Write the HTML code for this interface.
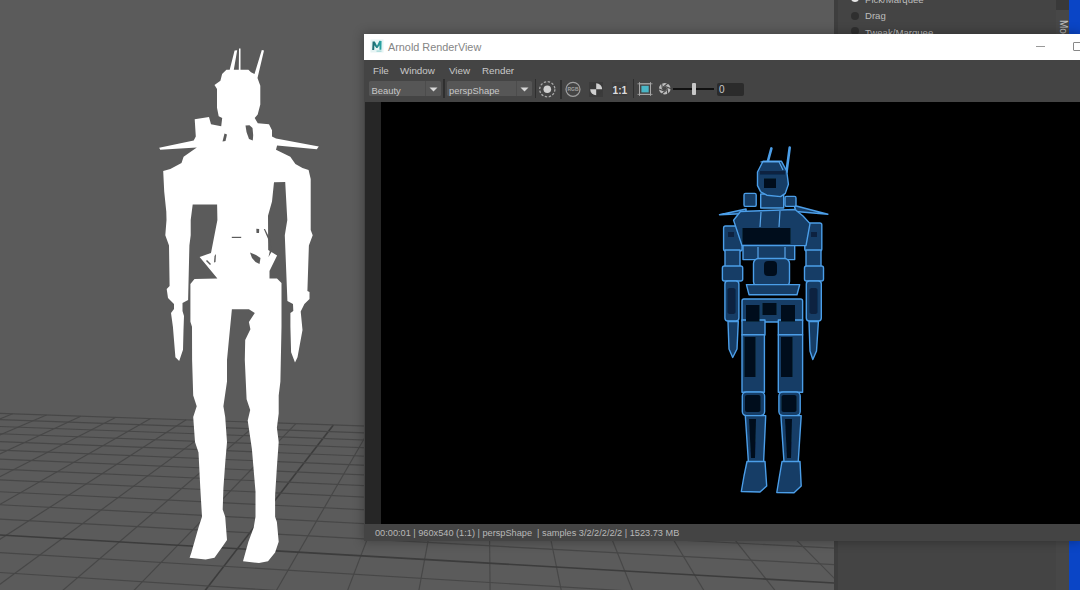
<!DOCTYPE html>
<html><head><meta charset="utf-8">
<style>
*{margin:0;padding:0;box-sizing:border-box}
html,body{width:1080px;height:590px;overflow:hidden;background:#5b5b5b;font-family:"Liberation Sans",sans-serif}
.abs{position:absolute}
#vp{position:absolute;left:0;top:0;width:834px;height:590px;background:#5b5b5b}
#vpstrip{left:834px;top:0;width:4px;height:590px;background:#3e3e3e}
#panel{left:838px;top:0;width:218px;height:590px;background:#444}
#pstrip{left:1056px;top:0;width:13px;height:590px;background:#474747}
#pstripTop{left:1056px;top:0;width:13px;height:10px;background:#393939}
#blue{left:1069px;top:0;width:11px;height:590px;background:#0a45c6}
.radio{width:8px;height:8px;border-radius:50%;background:#2f2f2f}
.ptxt{color:#bdbdbd;font-size:9.6px;line-height:10px;white-space:nowrap}
#win{left:364px;top:34.4px;width:716px;height:507px;background:#444;box-shadow:0 0 10px 1px rgba(0,0,0,0.28)}
#title{left:0;top:0;width:716px;height:25.6px;background:#fff}
.menu{color:#c8c8c8;font-size:9.8px;line-height:10px;white-space:nowrap}
.dd{background:#565656;border-radius:1.5px}
.ddtxt{color:#c8c8c8;font-size:9.4px;line-height:10px;white-space:nowrap}
.sep{width:1.5px;background:#2f2f2f}
</style></head><body>
<svg id="vp" width="834" height="590" viewBox="0 0 834 590">
<rect width="834" height="590" fill="#5b5b5b"/>
<g shape-rendering="geometricPrecision">
<line x1="-86.3" y1="410.3" x2="-1505.8" y2="864.2" stroke="#474747" stroke-width="1.15"/>
<line x1="-53.7" y1="411.5" x2="-1421.8" y2="878.2" stroke="#474747" stroke-width="1.15"/>
<line x1="-20.7" y1="412.6" x2="-1334.1" y2="892.8" stroke="#474747" stroke-width="1.15"/>
<line x1="12.7" y1="413.8" x2="-1242.4" y2="908.0" stroke="#474747" stroke-width="1.15"/>
<line x1="46.5" y1="415.0" x2="-1146.4" y2="924.0" stroke="#474747" stroke-width="1.15"/>
<line x1="80.8" y1="416.2" x2="-1045.7" y2="940.8" stroke="#474747" stroke-width="1.15"/>
<line x1="115.5" y1="417.4" x2="-940.1" y2="958.3" stroke="#474747" stroke-width="1.15"/>
<line x1="150.6" y1="418.6" x2="-829.1" y2="976.8" stroke="#474747" stroke-width="1.15"/>
<line x1="186.2" y1="419.8" x2="-712.4" y2="996.2" stroke="#474747" stroke-width="1.15"/>
<line x1="222.3" y1="421.1" x2="-589.5" y2="1016.6" stroke="#474747" stroke-width="1.15"/>
<line x1="258.8" y1="422.4" x2="-459.9" y2="1038.2" stroke="#474747" stroke-width="1.15"/>
<line x1="295.9" y1="423.6" x2="-323.0" y2="1061.0" stroke="#474747" stroke-width="1.15"/>
<line x1="333.4" y1="424.9" x2="-178.2" y2="1085.1" stroke="#3c3c3c" stroke-width="1.6"/>
<line x1="371.4" y1="426.3" x2="-24.7" y2="1110.6" stroke="#474747" stroke-width="1.15"/>
<line x1="409.9" y1="427.6" x2="138.1" y2="1137.7" stroke="#474747" stroke-width="1.15"/>
<line x1="449.0" y1="429.0" x2="311.3" y2="1166.5" stroke="#474747" stroke-width="1.15"/>
<line x1="488.6" y1="430.4" x2="495.7" y2="1197.1" stroke="#474747" stroke-width="1.15"/>
<line x1="528.7" y1="431.8" x2="692.7" y2="1229.9" stroke="#474747" stroke-width="1.15"/>
<line x1="569.4" y1="433.2" x2="903.4" y2="1265.0" stroke="#474747" stroke-width="1.15"/>
<line x1="610.7" y1="434.6" x2="1129.4" y2="1302.5" stroke="#474747" stroke-width="1.15"/>
<line x1="652.5" y1="436.1" x2="1372.4" y2="1342.9" stroke="#474747" stroke-width="1.15"/>
<line x1="694.9" y1="437.5" x2="1634.3" y2="1386.5" stroke="#474747" stroke-width="1.15"/>
<line x1="738.0" y1="439.0" x2="1917.6" y2="1433.6" stroke="#474747" stroke-width="1.15"/>
<line x1="781.6" y1="440.6" x2="2224.8" y2="1484.7" stroke="#474747" stroke-width="1.15"/>
<line x1="825.9" y1="442.1" x2="2559.3" y2="1540.4" stroke="#474747" stroke-width="1.15"/>
<line x1="-86.3" y1="410.3" x2="825.9" y2="442.1" stroke="#474747" stroke-width="1.15"/>
<line x1="-103.8" y1="415.9" x2="838.2" y2="449.9" stroke="#474747" stroke-width="1.15"/>
<line x1="-122.4" y1="421.9" x2="851.3" y2="458.2" stroke="#474747" stroke-width="1.15"/>
<line x1="-142.3" y1="428.2" x2="865.5" y2="467.2" stroke="#474747" stroke-width="1.15"/>
<line x1="-163.4" y1="435.0" x2="880.9" y2="476.9" stroke="#474747" stroke-width="1.15"/>
<line x1="-186.1" y1="442.3" x2="897.5" y2="487.5" stroke="#474747" stroke-width="1.15"/>
<line x1="-210.4" y1="450.0" x2="915.6" y2="498.9" stroke="#474747" stroke-width="1.15"/>
<line x1="-236.5" y1="458.4" x2="935.4" y2="511.5" stroke="#474747" stroke-width="1.15"/>
<line x1="-264.7" y1="467.4" x2="957.1" y2="525.2" stroke="#474747" stroke-width="1.15"/>
<line x1="-295.1" y1="477.1" x2="981.0" y2="540.3" stroke="#474747" stroke-width="1.15"/>
<line x1="-328.1" y1="487.7" x2="1007.4" y2="557.1" stroke="#474747" stroke-width="1.15"/>
<line x1="-364.0" y1="499.2" x2="1036.8" y2="575.7" stroke="#474747" stroke-width="1.15"/>
<line x1="-403.3" y1="511.7" x2="1069.8" y2="596.6" stroke="#3c3c3c" stroke-width="1.6"/>
<line x1="-446.3" y1="525.5" x2="1106.9" y2="620.1" stroke="#474747" stroke-width="1.15"/>
<line x1="-493.7" y1="540.6" x2="1149.1" y2="646.9" stroke="#474747" stroke-width="1.15"/>
<line x1="-546.1" y1="557.4" x2="1197.5" y2="677.5" stroke="#474747" stroke-width="1.15"/>
<line x1="-604.5" y1="576.1" x2="1253.4" y2="713.0" stroke="#474747" stroke-width="1.15"/>
<line x1="-669.9" y1="597.0" x2="1319.0" y2="754.5" stroke="#474747" stroke-width="1.15"/>
<line x1="-743.7" y1="620.5" x2="1396.8" y2="803.8" stroke="#474747" stroke-width="1.15"/>
<line x1="-827.4" y1="647.3" x2="1490.6" y2="863.3" stroke="#474747" stroke-width="1.15"/>
<line x1="-923.5" y1="678.0" x2="1606.1" y2="936.4" stroke="#474747" stroke-width="1.15"/>
<line x1="-1034.6" y1="713.6" x2="1751.5" y2="1028.6" stroke="#474747" stroke-width="1.15"/>
<line x1="-1164.8" y1="755.2" x2="1940.4" y2="1148.2" stroke="#474747" stroke-width="1.15"/>
<line x1="-1319.3" y1="804.6" x2="2195.5" y2="1309.9" stroke="#474747" stroke-width="1.15"/>
<line x1="-1505.8" y1="864.2" x2="2559.3" y2="1540.4" stroke="#474747" stroke-width="1.15"/>
</g>
<path fill="#fff" d="M222.1 73.9 L226.4 69.7 L229.7 69.7 L234.6 50.5 L237.2 50.2 L233.8 69.7 L238.8 69.7 L239 48.5 L240.5 48.5 L240.5 69.7 L248.4 69.7 L251 72.2 L254.5 74 L261.8 50 L264 50.5 L257.5 78 L260.3 85.8 L260.3 104.4 L257.7 114.6 L254.7 118.1 L257.8 123.2 L269 124.2 L272 130.3 L272 136.4 L276 138.5 L318.8 146.6 L316.8 149.2 L277.1 145.6 L276 149.7 L290.3 156.8 L295.4 163.9 L302.5 168 L308.6 170 L310.7 179.1 L310.7 230 L312.7 235.3 L308.9 245.4 L307.4 291 L309.5 292 L309.5 299 L304.4 304 L300.7 311.5 L302.5 330 L297.5 357.3 L295 362.4 L291.1 352.2 L290.4 326.8 L290.4 313 L293.3 311 L293 304 L287.4 301 L284.8 235.3 L287.3 220 L285.2 182 L274 182.2 L272 201.5 L268 215.8 L268.2 250 L277.1 255.6 L269.5 270.9 L269.5 278.5 L277 278.5 L281.5 283 L281.5 326.8 L280.4 381.4 L278.7 395.6 L278.7 413.4 L276.9 427.7 L278.7 442 L276.9 466.9 L275.1 495.4 L275.1 516.7 L276.9 522.1 L278.7 541.7 L275.1 552.4 L268 561.3 L259 563.1 L243 561.3 L248.4 541.7 L253.7 527.4 L255.5 516.7 L255.5 491.8 L251.9 449.1 L247.7 420.6 L250.2 409.9 L246.6 399.2 L244.8 360 L245.2 340 L250.4 329.3 L248.9 321.9 L254.8 313 L248.9 309.3 L231.9 309.3 L228.9 340 L227 360 L227 381.4 L223.4 406.3 L225.2 417 L227 442 L225.2 463.3 L223.4 488.3 L222.7 509.6 L225.2 516.7 L227 539.9 L223.4 545.2 L214.5 557.7 L205.6 559.5 L189.6 557.7 L191.4 552.4 L198.5 527.4 L202 516.7 L200.3 488.3 L198.5 452.6 L195 442 L193.2 417 L196.7 406.3 L193.2 395.6 L192.1 360 L192 326.8 L190.4 321.7 L190.4 284 L194.5 279 L217.4 278.5 L199.6 256.9 L211 253 L217.4 220 L217.1 204.6 L192.7 204.6 L190.7 220 L190.7 235.3 L189.4 245.4 L188.1 300 L182.5 303 L182.5 311 L184 316 L183.5 330 L183 349.7 L179.2 361.1 L175.4 357.3 L172.9 326.8 L171 313 L174 309 L174 304 L168 298 L166.7 289 L169.6 286 L169 245.4 L165.3 235.3 L166.5 220 L166.3 211.7 L164.2 191.4 L163.2 171 L170.3 169 L181.5 162.9 L183.6 156.8 L196.8 147.6 L160.2 149.7 L159.2 147.8 L193.7 140.5 L195.8 136.4 L194.7 119.2 L209 117.1 L211 124.2 L221.2 126.3 L222.2 118.1 L218.7 116.3 L217 107.8 L217 89 L214.5 84.9 L220.4 80.7 Z"/>
<g fill="#5b5b5b">
<path d="M245.5 125.5 L249.5 125.2 L252.5 128 L253.2 135 L252.8 140.6 L249 139 L246.5 132 Z"/>
<path d="M224.5 133.5 L227 134.5 L225.5 141 L222.5 141.5 Z"/>
<path d="M250 252.5 L256 255 L260.5 258 L259.5 264 L255.5 262 L252 258 Z"/>
<path d="M256.3 228.7 L259.2 229 L259 233 L256.5 233 Z"/>
<path d="M263.8 229 L265 229 L270.5 240 L271.5 252 L268.5 257 L270 250 L268.5 240 Z"/>
<rect x="231.8" y="236.8" width="9.4" height="1.2"/>
<path d="M207 260 L211 264 L210 265 L206 261 Z"/>
<path d="M214.5 256 L216 254 L215.5 262 L214 262.5 Z"/>
</g>
</svg>
<div class="abs" id="vpstrip"></div>
<div class="abs" id="panel"></div>
<div class="abs" id="pstrip"></div>
<div class="abs" id="pstripTop"></div>
<div class="abs" id="blue"></div>
<!-- panel radios -->
<div class="abs radio" style="left:851px;top:-6px;background:#e8e8e8"></div>
<div class="abs ptxt" style="left:865px;top:-5px">Pick/Marquee</div>
<div class="abs radio" style="left:851px;top:12px"></div>
<div class="abs ptxt" style="left:865px;top:11px">Drag</div>
<div class="abs radio" style="left:851px;top:27px"></div>
<div class="abs ptxt" style="left:865px;top:27.5px">Tweak/Marquee</div>
<div class="abs ptxt" style="left:1057px;top:19px;transform-origin:0 0;transform:translate(11px,1px) rotate(90deg);font-size:10px">Mo</div>

<div class="abs" id="win">
  <div class="abs" id="title">
    <svg class="abs" style="left:5.5px;top:4.8px" width="14" height="14" viewBox="0 0 14 14">
      <defs><linearGradient id="mg" x1="0" y1="0" x2="1" y2="0"><stop offset="0" stop-color="#18676d"/><stop offset="1" stop-color="#2aa7a6"/></linearGradient></defs>
      <rect x="0.5" y="0.5" width="13" height="13" fill="#e6f4f4"/>
      <path d="M2.2 11 L2.6 2.4 L4.8 2.4 L7 6.8 L9.4 1.8 L11.6 2 L11.4 10.8 L9.5 10.8 L9.5 6.2 L7.5 9 L6.3 9 L4.4 6.3 L4.2 11 Z" fill="url(#mg)"/>
      <rect x="6.5" y="11.6" width="5" height="1" fill="#8fcfcf"/>
    </svg>
    <div class="abs" style="left:24px;top:7px;font-size:10.85px;line-height:12px;color:#858585;white-space:nowrap">Arnold RenderView</div>
    <div class="abs" style="left:672px;top:12px;width:9px;height:1px;background:#999"></div>
    <div class="abs" style="left:709px;top:8px;width:10px;height:9px;border:1px solid #888;border-radius:1px"></div>
  </div>
  <!-- menu -->
  <div class="abs menu" style="left:9px;top:32px">File</div>
  <div class="abs menu" style="left:36px;top:32px">Window</div>
  <div class="abs menu" style="left:85px;top:32px">View</div>
  <div class="abs menu" style="left:118px;top:32px">Render</div>
  <!-- toolbar -->
  <div class="abs dd" style="left:5px;top:47px;width:72px;height:15px"></div>
  <div class="abs" style="left:61px;top:47px;width:1px;height:15px;background:#4c4c4c"></div>
  <div class="abs ddtxt" style="left:7.5px;top:52px">Beauty</div>
  <svg class="abs" style="left:65px;top:52.5px" width="9" height="5"><path d="M0.5 0.5 L8.5 0.5 L4.5 4.5Z" fill="#d8d8d8"/></svg>
  <div class="abs sep" style="left:79px;top:45px;height:19px"></div>
  <div class="abs dd" style="left:82.5px;top:47px;width:85px;height:15px"></div>
  <div class="abs" style="left:152px;top:47px;width:1px;height:15px;background:#4c4c4c"></div>
  <div class="abs ddtxt" style="left:85px;top:52px">perspShape</div>
  <svg class="abs" style="left:156px;top:52.5px" width="9" height="5"><path d="M0.5 0.5 L8.5 0.5 L4.5 4.5Z" fill="#d8d8d8"/></svg>
  <div class="abs sep" style="left:170.5px;top:45px;height:19px"></div>
  <svg class="abs" style="left:173px;top:45px" width="20" height="20" viewBox="0 0 20 20">
    <circle cx="10.3" cy="10.3" r="7.6" fill="none" stroke="#a8a8a8" stroke-width="1.3" stroke-dasharray="2.4 1.6"/>
    <circle cx="10.3" cy="10.3" r="3.8" fill="#d0d0d0"/>
  </svg>
  <div class="abs sep" style="left:196px;top:46px;height:19px"></div>
  <svg class="abs" style="left:199px;top:45px" width="20" height="20" viewBox="0 0 20 20">
    <circle cx="10" cy="10.3" r="7" fill="none" stroke="#a0a0a0" stroke-width="1.2"/>
    <text x="10" y="12" font-size="5" font-family="Liberation Sans" fill="#a0a0a0" text-anchor="middle" font-weight="bold">RGB</text>
  </svg>
  <div class="abs" style="left:225px;top:48px;width:14px;height:14.5px;background:#3b3b3b"></div>
  <svg class="abs" style="left:225px;top:48px" width="14" height="15" viewBox="0 0 14 15">
    <circle cx="7.2" cy="7.3" r="6" fill="#3a3a3a"/>
    <path d="M7.2 7.3 L7.2 1.3 A6 6 0 0 1 13.2 7.3Z" fill="#cfcfcf"/>
    <path d="M7.2 7.3 L7.2 13.3 A6 6 0 0 1 1.2 7.3Z" fill="#cfcfcf"/>
  </svg>
  <div class="abs" style="left:247.5px;top:48px;width:15px;height:14px;background:#3f3f3f"></div>
  <div class="abs" style="left:248.5px;top:50.5px;font-size:10.2px;line-height:12px;color:#dcdcdc;white-space:nowrap;font-weight:bold;letter-spacing:0px">1:1</div>
  <div class="abs sep" style="left:268.5px;top:45px;height:19px"></div>
  <svg class="abs" style="left:273px;top:48px" width="16" height="16" viewBox="0 0 16 16">
    <rect x="4.4" y="3.8" width="7.3" height="6.6" fill="#4ab6c6"/>
    <rect x="2.5" y="1.8" width="11" height="10.6" fill="none" stroke="#a8a8a8" stroke-width="1"/>
    <path d="M2.5 0 V14 M13.5 0 V14 M0.5 1.8 H15.5 M0.5 12.4 H15.5" stroke="#a8a8a8" stroke-width="0.8"/>
  </svg>
  <svg class="abs" style="left:294px;top:48px" width="14" height="14" viewBox="0 0 14 14">
    <circle cx="6.75" cy="6.7" r="5.8" fill="#bcbcbc"/>
    <path d="M8.97 6.10 L8.38 8.33 L6.15 8.92 L4.53 7.30 L5.12 5.07 L7.35 4.48 Z" fill="#484848"/>
    <path d="M8.97 6.10 L9.90 12.16 M8.38 8.33 L3.60 12.16 M6.15 8.92 L0.45 6.70 M4.53 7.30 L3.60 1.24 M5.12 5.07 L9.90 1.24 M7.35 4.48 L13.05 6.70" stroke="#454545" stroke-width="1.1"/>
  </svg>
  <div class="abs" style="left:309px;top:54px;width:41px;height:2px;background:#111"></div>
  <div class="abs" style="left:328px;top:49px;width:4px;height:12px;background:#c8c8c8;border-radius:1px"></div>
  <div class="abs" style="left:352.5px;top:49px;width:27px;height:13px;background:#2b2b2b;border-radius:2px"></div>
  <div class="abs" style="left:355px;top:51px;font-size:10px;line-height:10px;color:#c8c8c8">0</div>
  <!-- render area -->
  <div class="abs" style="left:1px;top:68px;width:16px;height:422px;background:#262626"></div>
  <div class="abs" style="left:17px;top:68px;width:699px;height:422px;background:#000;overflow:hidden">
    <svg width="699" height="422" viewBox="381 102 699 422" style="position:absolute;left:0;top:0">
      <defs><filter id="glow" x="-10%" y="-10%" width="120%" height="120%"><feGaussianBlur stdDeviation="0.7"/></filter></defs>
      <g filter="url(#glow)" stroke="#4c9ee8" stroke-width="1.4" stroke-linejoin="round" fill="#143c66">
  <line x1="771.4" y1="148.4" x2="767.4" y2="163" stroke-width="2.6" stroke-linecap="round"/>
  <line x1="789.7" y1="147.6" x2="786.5" y2="172" stroke-width="2.6" stroke-linecap="round"/>
  <path d="M719.6 214.7 L746 209 L746 213.5 Z" stroke-width="1.6"/>
  <path d="M827.8 214.2 L794.3 205.4 L795.8 211.5 Z" stroke-width="1.6"/>
  <rect x="744" y="193.4" width="12.2" height="13" rx="1.5"/>
  <rect x="785" y="196.4" width="11" height="10" rx="1.5"/>
  <rect x="760.7" y="194" width="23" height="14"/>
  <path d="M763 161.3 L781.5 161.3 L786.7 171 L788.4 184.2 L785.3 193.4 L780.6 196.6 L766.8 195.2 L760.7 191.8 L757.5 185.7 L757.5 172 Z"/>
  <rect x="723.6" y="226" width="18.5" height="25" rx="2"/>
  <rect x="725" y="250" width="15" height="17"/>
  <rect x="722.4" y="266" width="20.3" height="15" rx="2"/>
  <rect x="724.9" y="281" width="14" height="40" rx="3"/>
  <path d="M728 321.5 L738.3 321.5 L737 349 L732.7 357.5 L729 349 Z"/>
  <rect x="804.8" y="223" width="17" height="28" rx="2"/>
  <rect x="806" y="250" width="15" height="17"/>
  <rect x="804.5" y="266" width="19" height="15" rx="2"/>
  <rect x="806.3" y="281" width="15" height="40" rx="3"/>
  <path d="M809 321.5 L818.4 321.5 L816.5 351 L812.8 359.5 L810 351 Z"/>
  <path d="M740.4 211.5 L795 209.5 L803 216 L810 223.6 L806 245.6 L742 245.6 L733.6 220.2 Z"/>
  <rect x="743" y="245.6" width="51.7" height="14"/>
  <rect x="753.5" y="258.5" width="36" height="28" rx="5"/>
  <path d="M746.4 284.6 L799.7 284.6 L797 294.7 L749 294.7 Z"/>
  <rect x="742" y="299" width="60.6" height="23" rx="2"/>
  <rect x="742" y="320" width="23" height="15"/>
  <rect x="778.3" y="320" width="24.3" height="15"/>
  <rect x="742" y="334.7" width="22.4" height="57.5"/>
  <rect x="778.3" y="334.7" width="24.3" height="57.5"/>
  <rect x="742.3" y="392" width="22.3" height="23.6" rx="4"/>
  <rect x="778.9" y="392" width="21.3" height="23.6" rx="4"/>
  <path d="M745.3 415.6 L765.7 415.6 L763.6 462 L748.4 462 Z"/>
  <path d="M780.9 415.6 L801.2 415.6 L798.2 462 L784 462 Z"/>
  <path d="M747 461.5 L765 461.5 L766.7 486 L760 492 L741.3 491.5 L744 476 Z"/>
  <path d="M782 461.5 L800 461.5 L801.2 486 L794 492.8 L776.8 492.5 L779.5 476 Z"/>
</g>
<g stroke="#5fb0f8" stroke-width="1.2" fill="none" filter="url(#glow)" opacity="0.9">
  <path d="M761 212 L760 227 M780 211 L779 227 M758 247 L758 258 M785 247 L785 258"/>
  <path d="M760.5 161.8 L779 161.8 L783 170"/>
</g>
<g fill="#06101c" filter="url(#glow)">
  <rect x="764" y="178.5" width="12" height="9.5"/>
  <rect x="760" y="171" width="25" height="3.5" fill="#0c2440"/>
  <rect x="742.5" y="228" width="48" height="16"/>
  <rect x="746" y="305" width="13.5" height="16.5"/>
  <rect x="762.5" y="303" width="14" height="12"/>
  <rect x="781" y="305" width="14" height="16.5"/>
  <rect x="744.5" y="337" width="11" height="40"/>
  <rect x="781" y="337" width="11.5" height="40"/>
  <rect x="745" y="395" width="15.5" height="17" rx="2"/>
  <rect x="781.5" y="395" width="15" height="17" rx="2"/>
  <path d="M749 419 L756 419 L755 458 L751 458 Z"/>
  <path d="M785 419 L792 419 L791 458 L787 458 Z"/>
  <rect x="727.5" y="288" width="8" height="26" rx="2" fill="#0c2440"/>
  <rect x="809.5" y="288" width="8" height="26" rx="2" fill="#0c2440"/>
  <rect x="764" y="261" width="13" height="15" rx="4" fill="#06101c"/>
  <rect x="728" y="232" width="6" height="5" fill="#0c2440"/>
  <rect x="811" y="232" width="6" height="5" fill="#0c2440"/>
</g>

    </svg>
  </div>
  <!-- status -->
  <div class="abs" style="left:11px;top:494px;font-size:9.2px;line-height:10px;color:#b8b8b8;white-space:nowrap">00:00:01 | 960x540 (1:1) | perspShape &nbsp;| samples 3/2/2/2/2/2 | 1523.73 MB</div>
</div>
</body></html>
